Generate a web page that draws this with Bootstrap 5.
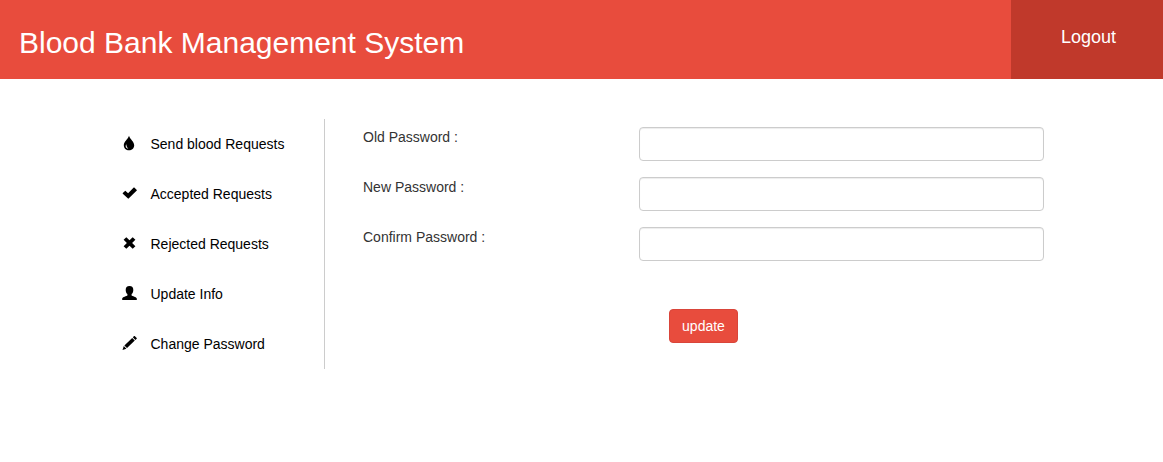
<!DOCTYPE html>
<html lang="en">
<head>
<meta charset="utf-8">
<meta name="viewport" content="width=device-width, initial-scale=1">
<title>Blood Bank Management System</title>
<link href="https://cdn.jsdelivr.net/npm/bootstrap@5.3.0/dist/css/bootstrap.min.css" rel="stylesheet">
<style>
body{font-family:"Liberation Sans",Arial,sans-serif;font-size:14px;line-height:20px;color:#333;background:#fff}
.topbar{height:79px;background:#e84c3d;color:#fff}
.topbar h1{font-size:30px;line-height:33px;font-weight:400;padding:26px 0 0 19px}
.logout{width:152px;background:#c0392b;color:#fff;font-size:18px;line-height:20px;padding:27px 0 0 50px}
.main{padding:40px 119px 0 122px}
.side{width:203px;height:250px;border-right:1px solid #ccc}
.side a{height:50px;color:#000;gap:13.5px}
.side svg{width:15px;height:14px;margin-top:-2px;fill:#000;overflow:visible}
.pw-form{padding:8px 0 0 38px}
.pw-row{height:50px}
.pw-row input{width:405px;height:34px;border:1px solid #ccc;border-radius:4px;font-size:14px;box-shadow:inset 0 1px 1px rgba(0,0,0,.075)}
.btn-update{margin:32px 0 0 306px;width:69px;height:34px;padding:6px 0;font-size:14px;line-height:20px;border-radius:4px;--bs-btn-color:#fff;--bs-btn-bg:#e84c3d;--bs-btn-border-color:#d9453a;--bs-btn-hover-color:#fff;--bs-btn-hover-bg:#c0392b;--bs-btn-hover-border-color:#c0392b}
</style>
</head>
<body>
<header class="topbar d-flex justify-content-between">
  <h1 class="m-0">Blood Bank Management System</h1>
  <a href="#" class="logout text-decoration-none">Logout</a>
</header>
<main class="main d-flex">
  <nav class="side nav flex-column flex-nowrap flex-shrink-0">
    <a href="#" class="d-flex align-items-center text-decoration-none"><svg viewBox="0 0 15 14"><path fill-rule="evenodd" d="M7 -.2C8 3.2 12.2 5.8 12.2 9.2C12.2 12.1 9.9 14.3 7 14.3S1.8 12.1 1.8 9.2C1.8 5.8 6 3.2 7 -.2ZM4.3 8.2C3 10.2 4 12.2 6.3 12.7C5.1 11.4 4.4 10 4.3 8.2Z"/></svg>Send blood Requests</a>
    <a href="#" class="d-flex align-items-center text-decoration-none"><svg viewBox="0 0 15 14"><path d="M12.3 1.6L14.8 3.9Q15 4.2 14.8 4.5L6.6 12.5Q6.3 12.8 6 12.5L.8 7.7Q.5 7.4 .8 7.1L3 5Q3.3 4.7 3.6 5L6.1 7.3L11.7 1.6Q12 1.3 12.3 1.6Z"/></svg>Accepted Requests</a>
    <a href="#" class="d-flex align-items-center text-decoration-none"><svg viewBox="0 0 15 14"><path d="M4.3 1.2L7.5 4.3L10.7 1.2L13.4 3.8L10.1 7L13.4 10.2L10.7 12.8L7.5 9.7L4.3 12.8L1.6 10.2L4.9 7L1.6 3.8Z"/></svg>Rejected Requests</a>
    <a href="#" class="d-flex align-items-center text-decoration-none"><svg viewBox="0 0 15 14"><path d="M7.5 0C10.2 0 11.3 1.6 11.3 3.9C11.3 5.8 10.6 7.2 9.6 8V9.4C10.2 10.3 14.6 10.6 14.8 12.4V14H.2V12.4C.4 10.6 4.8 10.3 5.4 9.4V8C4.4 7.2 3.7 5.8 3.7 3.9C3.7 1.6 4.8 0 7.5 0Z"/></svg>Update Info</a>
    <a href="#" class="d-flex align-items-center text-decoration-none"><svg viewBox="0 0 15 14"><path d="M12.1.1Q12.4-.2 12.7.1L14.7 2.1Q15 2.4 14.7 2.7L13.4 3.9L10.8 1.3ZM10.2 1.9L12.8 4.5L5 12.1L2.4 9.5ZM1.8 10.1L4.4 12.7L.5 14Z"/></svg>Change Password</a>
  </nav>
  <form class="pw-form flex-grow-1">
    <div class="pw-row d-flex justify-content-between align-items-start"><label for="oldpw">Old Password :</label><input id="oldpw" type="password" class="form-control"></div>
    <div class="pw-row d-flex justify-content-between align-items-start"><label for="newpw">New Password :</label><input id="newpw" type="password" class="form-control"></div>
    <div class="pw-row d-flex justify-content-between align-items-start"><label for="confirmpw">Confirm Password :</label><input id="confirmpw" type="password" class="form-control"></div>
    <button type="button" class="btn btn-update">update</button>
  </form>
</main>
<script src="https://cdn.jsdelivr.net/npm/bootstrap@5.3.0/dist/js/bootstrap.bundle.min.js"></script>
</body>
</html>
